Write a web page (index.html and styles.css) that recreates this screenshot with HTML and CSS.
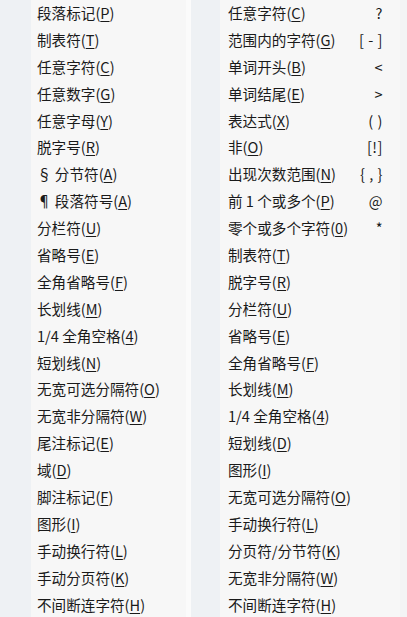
FILE: index.html
```html
<!DOCTYPE html>
<html lang="zh">
<head>
<meta charset="utf-8">
<link rel="stylesheet" href="styles.css">
</head>
<body>
<div class="page">
  <div class="gutter-left"></div>
  <ul class="panel panel-left">
    <li>段落标记(<u>P</u>)</li>
    <li>制表符(<u>T</u>)</li>
    <li>任意字符(<u>C</u>)</li>
    <li>任意数字(<u>G</u>)</li>
    <li>任意字母(<u>Y</u>)</li>
    <li>脱字号(<u>R</u>)</li>
    <li>§ 分节符(<u>A</u>)</li>
    <li>¶ 段落符号(<u>A</u>)</li>
    <li>分栏符(<u>U</u>)</li>
    <li>省略号(<u>E</u>)</li>
    <li>全角省略号(<u>F</u>)</li>
    <li>长划线(<u>M</u>)</li>
    <li>1/4 全角空格(<u>4</u>)</li>
    <li>短划线(<u>N</u>)</li>
    <li>无宽可选分隔符(<u>O</u>)</li>
    <li>无宽非分隔符(<u>W</u>)</li>
    <li>尾注标记(<u>E</u>)</li>
    <li>域(<u>D</u>)</li>
    <li>脚注标记(<u>F</u>)</li>
    <li>图形(<u>I</u>)</li>
    <li>手动换行符(<u>L</u>)</li>
    <li>手动分页符(<u>K</u>)</li>
    <li>不间断连字符(<u>H</u>)</li>
  </ul>
  <div class="strip"></div>
  <div class="gap"></div>
  <ul class="panel panel-right">
    <li><span>任意字符(<u>C</u>)</span><span class="key">?</span></li>
    <li><span>范围内的字符(<u>G</u>)</span><span class="key">[ - ]</span></li>
    <li><span>单词开头(<u>B</u>)</span><span class="key">&lt;</span></li>
    <li><span>单词结尾(<u>E</u>)</span><span class="key">&gt;</span></li>
    <li><span>表达式(<u>X</u>)</span><span class="key">( )</span></li>
    <li><span>非(<u>O</u>)</span><span class="key">[!]</span></li>
    <li><span>出现次数范围(<u>N</u>)</span><span class="key">{ , }</span></li>
    <li><span>前 1 个或多个(<u>P</u>)</span><span class="key">@</span></li>
    <li><span>零个或多个字符(<u>0</u>)</span><span class="key">*</span></li>
    <li><span>制表符(<u>T</u>)</span></li>
    <li><span>脱字号(<u>R</u>)</span></li>
    <li><span>分栏符(<u>U</u>)</span></li>
    <li><span>省略号(<u>E</u>)</span></li>
    <li><span>全角省略号(<u>F</u>)</span></li>
    <li><span>长划线(<u>M</u>)</span></li>
    <li><span>1/4 全角空格(<u>4</u>)</span></li>
    <li><span>短划线(<u>D</u>)</span></li>
    <li><span>图形(<u>I</u>)</span></li>
    <li><span>无宽可选分隔符(<u>O</u>)</span></li>
    <li><span>手动换行符(<u>L</u>)</span></li>
    <li><span>分页符/分节符(<u>K</u>)</span></li>
    <li><span>无宽非分隔符(<u>W</u>)</span></li>
    <li><span>不间断连字符(<u>H</u>)</span></li>
  </ul>
  <div class="gutter-right"></div>
</div>
</body>
</html>
```

FILE: styles.css
```css
html, body {
  margin: 0;
  padding: 0;
}
body {
  background: #eef1f4;
  font-family: "Noto Sans CJK SC", "Microsoft YaHei", sans-serif;
  font-size: 14.6px;
  color: #1a1a1a;
}
.page {
  display: flex;
  width: 407px;
  height: 617px;
  overflow: hidden;
}
.gutter-left {
  width: 31px;
  flex: none;
  background: #eef1f4;
}
.panel {
  list-style: none;
  margin: 0;
  background: #f7f7f7;
  flex: none;
  box-sizing: border-box;
}
.panel li {
  height: 26.9px;
  line-height: 26.9px;
  white-space: nowrap;
}
.panel u {
  text-decoration-thickness: 1px;
  text-underline-offset: 2px;
}
.panel-left {
  width: 155px;
  padding: 0 0 0 6px;
}
.strip {
  width: 5px;
  flex: none;
  background: #fbfbfb;
}
.gap {
  width: 29px;
  flex: none;
  background: #eef1f4;
}
.panel-right {
  width: 180px;
  padding: 0 17px 0 8px;
}
.panel-right li {
  display: flex;
  justify-content: space-between;
}
.key {
  letter-spacing: 0.5px;
}
.gutter-right {
  flex: 1;
  background: #f3f4f5;
}
```
